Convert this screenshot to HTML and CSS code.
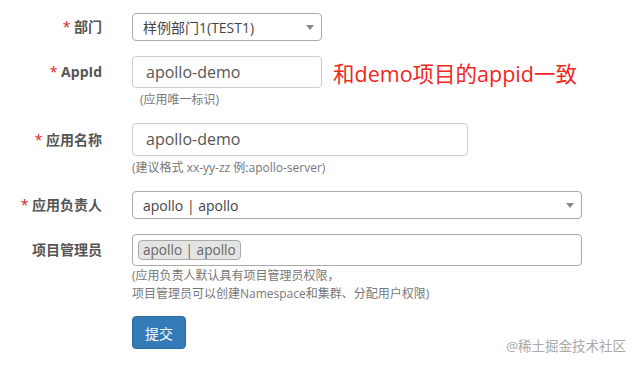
FILE: index.html
```html
<!DOCTYPE html>
<html lang="zh-CN">
<head>
  <meta charset="UTF-8">
  <meta name="viewport" content="width=device-width, initial-scale=1.0">
  <title>创建项目</title>
  <link rel="stylesheet" href="styles.css">
</head>
<body>
  <form class="form">
    <!-- 部门 -->
    <div class="row">
      <label class="label h28"><span class="star">*</span> 部门</label>
      <div class="field">
        <div class="select w190">
          <span>样例部门1(TEST1)</span>
          <i class="caret"></i>
        </div>
      </div>
    </div>

    <!-- AppId -->
    <div class="row">
      <label class="label h32"><span class="star">*</span> AppId</label>
      <div class="field">
        <div class="inline">
          <div class="input w190">apollo-demo</div>
          <span class="note">和demo项目的appid一致</span>
        </div>
        <div class="help indent">(应用唯一标识)</div>
      </div>
    </div>

    <!-- 应用名称 -->
    <div class="row">
      <label class="label h33"><span class="star">*</span> 应用名称</label>
      <div class="field">
        <div class="input w336 h33">apollo-demo</div>
        <div class="help">(建议格式 xx-yy-zz 例:apollo-server)</div>
      </div>
    </div>

    <!-- 应用负责人 -->
    <div class="row">
      <label class="label h28"><span class="star">*</span> 应用负责人</label>
      <div class="field">
        <div class="select w450">
          <span>apollo | apollo</span>
          <i class="caret"></i>
        </div>
      </div>
    </div>

    <!-- 项目管理员 -->
    <div class="row">
      <label class="label h32">项目管理员</label>
      <div class="field">
        <div class="multi w450">
          <span class="tag">apollo | apollo</span>
        </div>
        <div class="help lines">(应用负责人默认具有项目管理员权限，<br>项目管理员可以创建Namespace和集群、分配用户权限)</div>
      </div>
    </div>

    <div class="row submit">
      <div class="label"></div>
      <div class="field">
        <button class="btn" type="button">提交</button>
      </div>
    </div>
  </form>

  <div class="watermark">@稀土掘金技术社区</div>
</body>
</html>
```

FILE: styles.css
```css
body {
  margin: 0;
  font-family: "Open Sans", "Noto Sans CJK SC", sans-serif;
  font-size: 14px;
  color: #555;
  background: #fff;
}

.form {
  display: flex;
  flex-direction: column;
  gap: 15px;
  padding-top: 13px;
}

.row {
  display: flex;
  align-items: flex-start;
}

.submit {
  margin-top: -2px;
}

.label {
  width: 102px;
  flex: none;
  text-align: right;
  font-weight: bold;
  color: #555;
}

.h28 { line-height: 28px; }
.h32 { line-height: 32px; }
.h33 { line-height: 33px; }

.star {
  color: #e02020;
  font-weight: normal;
}

.field {
  margin-left: 30px;
}

.w190 { width: 190px; }
.w336 { width: 336px; }
.w450 { width: 450px; }

.select {
  box-sizing: border-box;
  height: 28px;
  display: flex;
  align-items: center;
  padding: 0 7px 0 10px;
  border: 1px solid #aaa;
  border-radius: 4px;
  color: #444;
}

.caret {
  margin-left: auto;
  width: 0;
  height: 0;
  border-top: 5px solid #888;
  border-left: 4px solid transparent;
  border-right: 4px solid transparent;
}

.inline {
  display: flex;
  align-items: center;
}

.input {
  box-sizing: border-box;
  height: 32px;
  line-height: 30px;
  padding: 0 13px;
  border: 1px solid #ccc;
  border-radius: 4px;
  font-size: 16px;
  color: #555;
}

.input.h33 {
  height: 33px;
  line-height: 31px;
}

.note {
  margin-left: 11px;
  font-size: 21.5px;
  color: #f0281e;
}

.help {
  font-size: 12px;
  line-height: 17px;
  margin-top: 3px;
  color: #777;
}

.indent {
  padding-left: 8px;
}

.lines {
  line-height: 18px;
  margin-top: 1px;
}

.multi {
  box-sizing: border-box;
  height: 32px;
  padding: 5px 5px;
  border: 1px solid #aaa;
  border-radius: 4px;
}

.tag {
  display: inline-block;
  box-sizing: border-box;
  height: 20px;
  line-height: 18px;
  padding: 0 4px;
  background: #e4e4e4;
  border: 1px solid #aaa;
  border-radius: 4px;
  color: #666;
  font-size: 13.6px;
}

.btn {
  width: 54px;
  height: 33px;
  padding: 0;
  border: 1px solid #2e6da4;
  border-radius: 4px;
  background: #337ab7;
  color: #fff;
  font-family: inherit;
  font-size: 14px;
}

.watermark {
  position: absolute;
  right: 12px;
  bottom: 11px;
  font-size: 13.5px;
  color: #aaa;
  text-shadow: 0 0 2px #fff;
}
```
